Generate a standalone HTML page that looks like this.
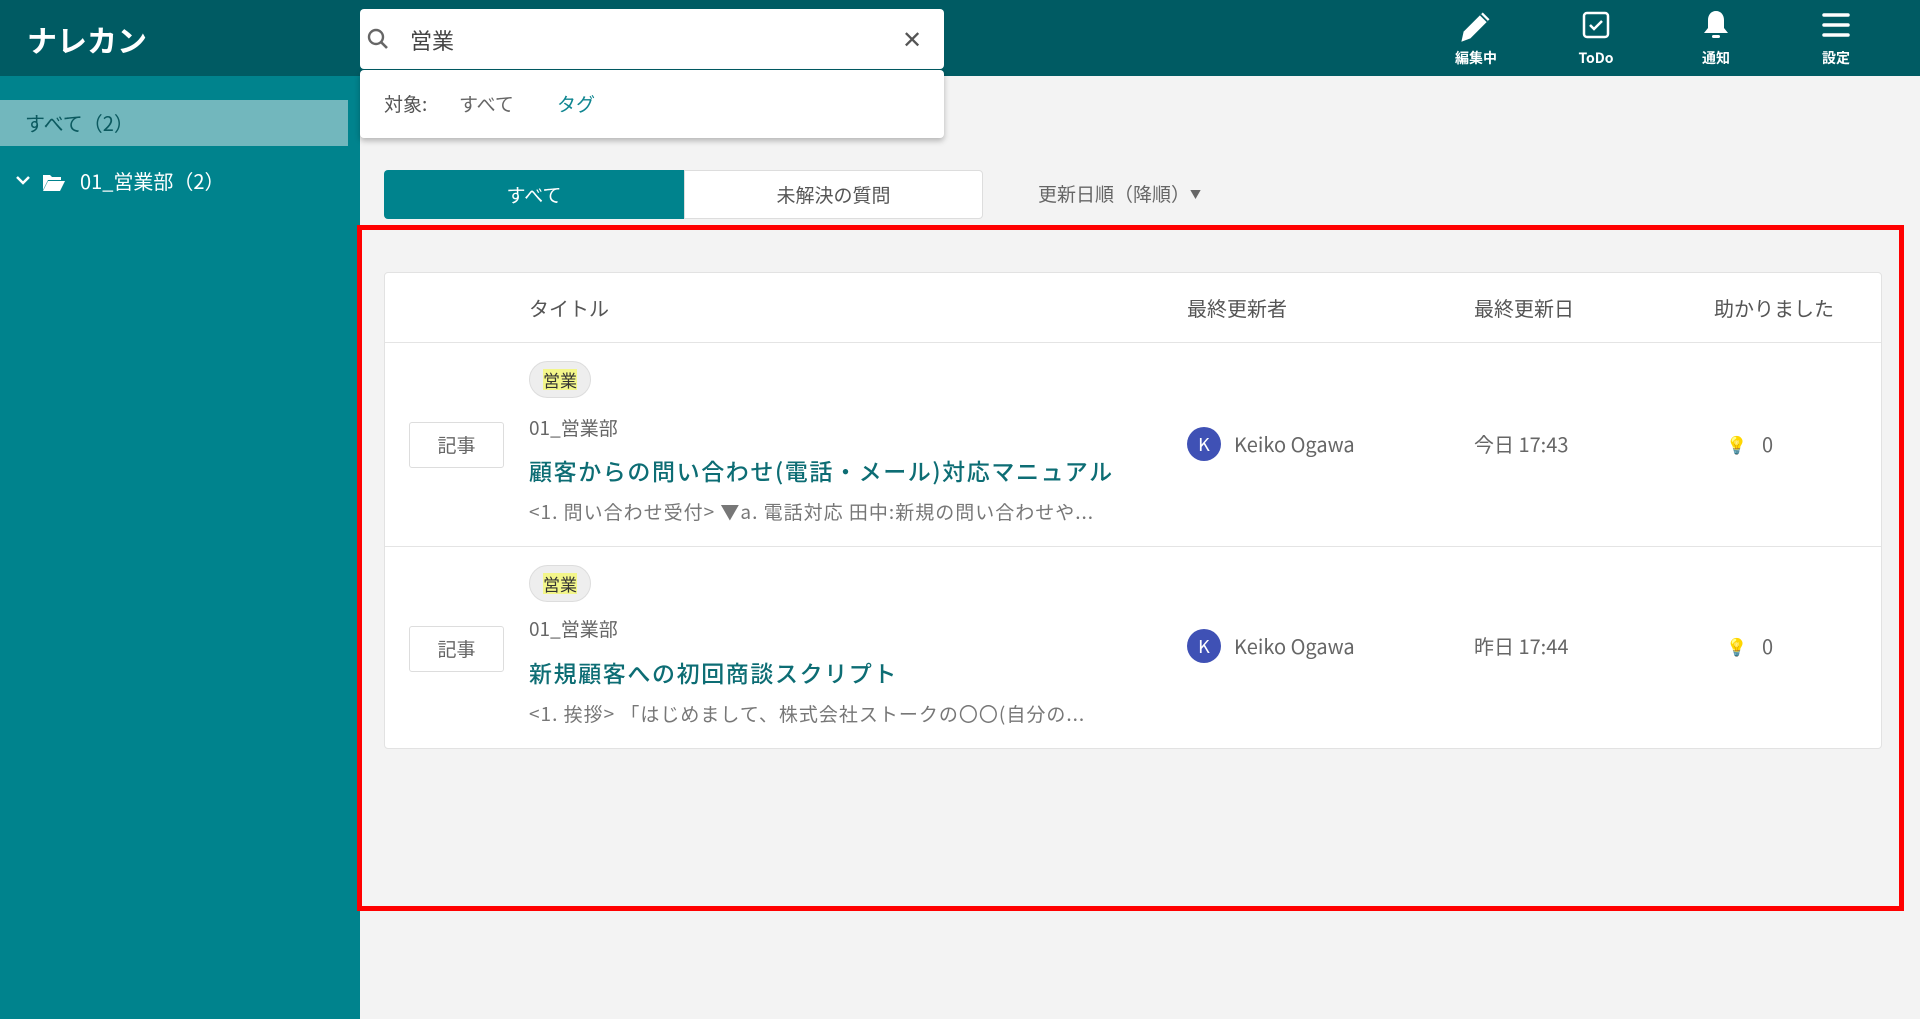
<!DOCTYPE html>
<html><head><meta charset="utf-8"><style>
*{box-sizing:border-box;margin:0;padding:0}
body{width:1920px;height:1019px;overflow:hidden;background:#f3f3f3;font-family:"Noto Sans CJK JP","Liberation Sans",sans-serif;position:relative;color:#555;line-height:1.2}
.a{position:absolute;white-space:nowrap}
</style></head><body>
<div class="a" style="left:0;top:0;width:1920px;height:76px;background:#005b63"></div>
<div class="a" style="left:0;top:76px;width:360px;height:943px;background:#00838d"></div>
<div class="a" style="left:27px;top:21px;font-size:30px;font-weight:bold;color:#fff">ナレカン</div>
<div class="a" style="left:0;top:100px;width:348px;height:46px;background:#72b7bd"></div>
<div class="a" style="left:25px;top:111px;font-size:20px;color:#0c5a60">すべて（2）</div>
<svg class="a" style="left:15px;top:175px" width="16" height="12" viewBox="0 0 16 12"><path d="M2 2l6 6 6-6" fill="none" stroke="#fff" stroke-width="2.5"/></svg>
<svg class="a" style="left:42px;top:172px" width="24" height="20" viewBox="0 0 24 20"><path d="M1 3h7l2 2h9v3H6L1 18z" fill="#fff"/><path d="M6 9h17l-5 10H1z" fill="#fff"/></svg>
<div class="a" style="left:80px;top:169px;font-size:20px;color:#fff">01_営業部（2）</div>
<!-- search -->
<div class="a" style="left:360px;top:9px;width:584px;height:60px;background:#fff;border-radius:4px"></div>
<svg class="a" style="left:366px;top:27px" width="24" height="24" viewBox="0 0 24 24"><circle cx="10" cy="10" r="7" fill="none" stroke="#666" stroke-width="2.4"/><path d="M15 15l6 6" stroke="#666" stroke-width="2.6"/></svg>
<div class="a" style="left:410px;top:27px;font-size:22px;color:#444">営業</div>
<div class="a" style="left:902px;top:24px;font-size:24px;color:#555">✕</div>
<div class="a" style="left:360px;top:70px;width:584px;height:68px;background:#fff;border-radius:4px;box-shadow:0 3px 6px rgba(0,0,0,.25)"></div>
<div class="a" style="left:384px;top:93px;font-size:19px;color:#555">対象:</div>
<div class="a" style="left:459px;top:93px;font-size:19px;color:#666">すべて</div>
<div class="a" style="left:557px;top:93px;font-size:19px;color:#0f8590">タグ</div>
<!-- nav -->
<svg class="a" style="left:1458px;top:8px" width="36" height="36" viewBox="0 0 32 32"><path d="M3 30l2-9L22 4l6 6-17 17z" fill="#fff"/><path d="M20 6l6 6" stroke="#005b63" stroke-width="1.5"/></svg>
<svg class="a" style="left:1582px;top:11px" width="28" height="28" viewBox="0 0 28 28"><rect x="2" y="2" width="24" height="24" rx="3" fill="none" stroke="#fff" stroke-width="2.5"/><path d="M8 14l4 4 8-8" fill="none" stroke="#fff" stroke-width="2.5"/></svg>
<svg class="a" style="left:1702px;top:9px" width="28" height="32" viewBox="0 0 28 32"><path d="M14 2c-5 0-8 4-8 9v8l-4 5h24l-4-5v-8c0-5-3-9-8-9z" fill="#fff"/><rect x="10" y="26" width="8" height="3" rx="1.5" fill="#fff"/></svg>
<svg class="a" style="left:1821px;top:12px" width="30" height="26" viewBox="0 0 30 26"><g stroke="#fff" stroke-width="3.5" stroke-linecap="round"><path d="M3 3h24M3 13h24M3 23h24"/></g></svg>
<div class="a" style="left:1476px;top:50px;font-size:14px;font-weight:bold;color:#fff;transform:translateX(-50%)">編集中</div>
<div class="a" style="left:1596px;top:50px;font-size:14px;font-weight:bold;color:#fff;transform:translateX(-50%)">ToDo</div>
<div class="a" style="left:1716px;top:50px;font-size:14px;font-weight:bold;color:#fff;transform:translateX(-50%)">通知</div>
<div class="a" style="left:1836px;top:50px;font-size:14px;font-weight:bold;color:#fff;transform:translateX(-50%)">設定</div>
<!-- tabs -->
<div class="a" style="left:384px;top:170px;width:300px;height:49px;background:#00838d;border-radius:4px 0 0 4px;color:#fff;font-size:19px;text-align:center;line-height:49px">すべて</div>
<div class="a" style="left:684px;top:170px;width:299px;height:49px;background:#fff;border:1px solid #ddd;border-radius:0 4px 4px 0;color:#555;font-size:19px;text-align:center;line-height:47px">未解決の質問</div>
<div class="a" style="left:1038px;top:183px;font-size:19px;color:#666">更新日順（降順）<span style="font-size:11px;vertical-align:3px">▼</span></div>
<!-- red box -->
<div class="a" style="left:357px;top:225px;width:1547px;height:686px;border:5px solid #f00"></div>
<div class="a" style="left:384px;top:272px;width:1498px;height:477px;background:#fff;border:1px solid #e2e2e2;border-radius:4px"></div>
<div class="a" style="left:385px;top:342px;width:1496px;height:1px;background:#e4e4e4"></div>
<div class="a" style="left:385px;top:546px;width:1496px;height:1px;background:#e4e4e4"></div>
<div class="a" style="left:529px;top:296px;font-size:20px;color:#555">タイトル</div>
<div class="a" style="left:1187px;top:296px;font-size:20px;color:#555">最終更新者</div>
<div class="a" style="left:1474px;top:296px;font-size:20px;color:#555">最終更新日</div>
<div class="a" style="left:1714px;top:296px;font-size:20px;color:#555">助かりました</div>

<div class="a" style="left:0;top:0">
<div class="a" style="left:529px;top:361px;width:62px;height:37px;background:#eee;border:1px solid #ddd;border-radius:19px"></div>
<div class="a" style="left:543px;top:369px;font-size:17px;color:#333;background:#f3f68a;line-height:21px">営業</div>
<div class="a" style="left:409px;top:422px;width:95px;height:46px;border:1px solid #ddd;border-radius:3px;background:#fff;font-size:19px;color:#666;text-align:center;line-height:44px">記事</div>
<div class="a" style="left:529px;top:417px;font-size:19px;color:#666">01_営業部</div>
<div class="a" style="left:529px;top:457px;font-size:23px;color:#0d6d74;font-weight:500;letter-spacing:1.6px">顧客からの問い合わせ(電話・メール)対応マニュアル</div>
<div class="a" style="left:529px;top:501px;font-size:19px;color:#777;letter-spacing:1px">&lt;1. 問い合わせ受付&gt; ▼a. 電話対応 田中:新規の問い合わせや...</div>
<div class="a" style="left:1187px;top:427px;width:34px;height:34px;border-radius:50%;background:#3f51b5;color:#fff;font-size:18px;text-align:center;line-height:34px">K</div>
<div class="a" style="left:1234px;top:432px;font-size:20px;color:#666">Keiko Ogawa</div>
<div class="a" style="left:1474px;top:432px;font-size:20px;color:#666">今日 17:43</div>
<div class="a" style="left:1726px;top:434px;font-size:17px;color:#f5c518">💡</div>
<div class="a" style="left:1762px;top:432px;font-size:20px;color:#666">0</div>
</div>
<div class="a" style="left:0;top:204px">
<div class="a" style="left:529px;top:361px;width:62px;height:37px;background:#eee;border:1px solid #ddd;border-radius:19px"></div>
<div class="a" style="left:543px;top:369px;font-size:17px;color:#333;background:#f3f68a;line-height:21px">営業</div>
<div class="a" style="left:409px;top:422px;width:95px;height:46px;border:1px solid #ddd;border-radius:3px;background:#fff;font-size:19px;color:#666;text-align:center;line-height:44px">記事</div>
<div class="a" style="left:529px;top:414px;font-size:19px;color:#666">01_営業部</div>
<div class="a" style="left:529px;top:455px;font-size:23px;color:#0d6d74;font-weight:500;letter-spacing:1.6px">新規顧客への初回商談スクリプト</div>
<div class="a" style="left:529px;top:499px;font-size:19px;color:#777;letter-spacing:1px">&lt;1. 挨拶&gt; 「はじめまして、株式会社ストークの〇〇(自分の...</div>
<div class="a" style="left:1187px;top:425px;width:34px;height:34px;border-radius:50%;background:#3f51b5;color:#fff;font-size:18px;text-align:center;line-height:34px">K</div>
<div class="a" style="left:1234px;top:430px;font-size:20px;color:#666">Keiko Ogawa</div>
<div class="a" style="left:1474px;top:430px;font-size:20px;color:#666">昨日 17:44</div>
<div class="a" style="left:1726px;top:432px;font-size:17px;color:#f5c518">💡</div>
<div class="a" style="left:1762px;top:430px;font-size:20px;color:#666">0</div>
</div>
</body></html>
